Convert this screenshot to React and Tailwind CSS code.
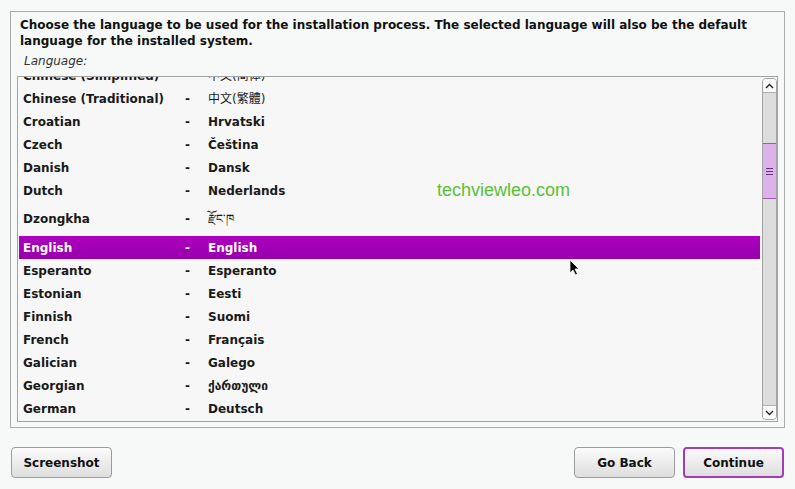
import React from "react";

const rows = [
  { name: "Chinese (Simplified)", native: "中文(简体)", light: true },
  { name: "Chinese (Traditional)", native: "中文(繁體)", light: true },
  { name: "Croatian", native: "Hrvatski" },
  { name: "Czech", native: "Čeština" },
  { name: "Danish", native: "Dansk" },
  { name: "Dutch", native: "Nederlands" },
  { name: "Dzongkha", native: "རྫོང་ཁ", tall: true, light: true },
  { name: "English", native: "English", selected: true },
  { name: "Esperanto", native: "Esperanto" },
  { name: "Estonian", native: "Eesti" },
  { name: "Finnish", native: "Suomi" },
  { name: "French", native: "Français" },
  { name: "Galician", native: "Galego" },
  { name: "Georgian", native: "ქართული" },
  { name: "German", native: "Deutsch" },
];

const Row = ({ row }) => (
  <div
    className={`flex items-center ${row.tall ? "h-[34px]" : "h-[23px]"} ${
      row.selected
        ? "bg-gradient-to-b from-[#ad00c0] to-[#9800aa] text-white mr-[2px] ml-[1px] pl-[4px]"
        : "text-[#1a1a1a] pl-[5px]"
    }`}
  >
    <span className="w-[162px] shrink-0">{row.name}</span>
    <span className="w-[23px] shrink-0">-</span>
    <span className={row.light ? "font-normal" : ""}>{row.native}</span>
  </div>
);

const Button = ({ children, primary }) => (
  <button
    className={`w-[101px] h-[31px] rounded-[4px] font-bold text-[12px] text-[#111] bg-gradient-to-b from-[#fbfbfb] to-[#dedede] ${
      primary ? "border-2 border-[#a43cb4]" : "border border-[#9c9c9c]"
    }`}
  >
    {children}
  </button>
);

export default function App() {
  return (
    <div
      className="relative w-[795px] h-[489px] bg-[#f6f9f7] overflow-hidden text-[12px] leading-[16px]"
      style={{ fontFamily: '"DejaVu Sans", "Noto Sans CJK TC", sans-serif' }}
    >
      <div className="pt-[11px] px-[10px]">
        <div className="h-[417px] border border-[#a9acaa] flex flex-col">
          <p className="pl-[9px] pt-[5px] font-bold text-[#111]">
            Choose the language to be used for the installation process. The selected language will also be the default
            language for the installed system.
          </p>
          <p className="pl-[13px] mt-[4px] italic text-[#333]">Language:</p>
          <div className="mt-[7px] mx-[6px] h-[346px] border border-[#a3a3a3] bg-[#f7f7f7] flex overflow-hidden">
            <div className="flex-1 overflow-hidden">
              <div className="-mt-[13px] font-bold">
                {rows.map((r) => (
                  <Row key={r.name} row={r} />
                ))}
              </div>
            </div>
            <div className="w-[15px] my-[1px] flex flex-col border border-[#a5a5a5] rounded-[4px] bg-[#dcdddc] overflow-hidden">
              <div className="h-[14px] bg-[#fafafa] border-b border-[#b0b0b0] flex items-center justify-center">
                <svg width="9" height="6" viewBox="0 0 9 6">
                  <path d="M1 5 L4.5 1.5 L8 5" fill="none" stroke="#222" strokeWidth="1.4" />
                </svg>
              </div>
              <div className="h-[50px]" />
              <div className="h-[56px] bg-[#ddb2ea] border-y border-[#9d5caf] flex flex-col items-center justify-center gap-[2px]">
                <div className="w-[7px] h-px bg-[#6a3080]" />
                <div className="w-[7px] h-px bg-[#6a3080]" />
                <div className="w-[7px] h-px bg-[#6a3080]" />
              </div>
              <div className="flex-1" />
              <div className="h-[14px] bg-[#fafafa] border-t border-[#b0b0b0] flex items-center justify-center">
                <svg width="9" height="6" viewBox="0 0 9 6">
                  <path d="M1 1 L4.5 4.5 L8 1" fill="none" stroke="#222" strokeWidth="1.4" />
                </svg>
              </div>
            </div>
          </div>
        </div>
      </div>

      <div className="flex items-center px-[11px] mt-[19px]">
        <Button>Screenshot</Button>
        <div className="flex-1" />
        <Button>Go Back</Button>
        <div className="w-[8px]" />
        <Button primary>Continue</Button>
      </div>

      <div
        className="absolute left-[437px] top-[180px] text-[18px] leading-[21px] text-[#5bbf3b]"
        style={{ fontFamily: '"Liberation Sans", Arial, sans-serif' }}
      >
        techviewleo.com
      </div>

      <svg className="absolute left-[569px] top-[259px]" width="11" height="17" viewBox="0 0 11 17">
        <path d="M1 1 L1 14 L4 11 L6.5 16 L8.5 15 L6 10 L10 10 Z" fill="#000" stroke="#fff" strokeWidth="0.8" />
      </svg>
    </div>
  );
}
